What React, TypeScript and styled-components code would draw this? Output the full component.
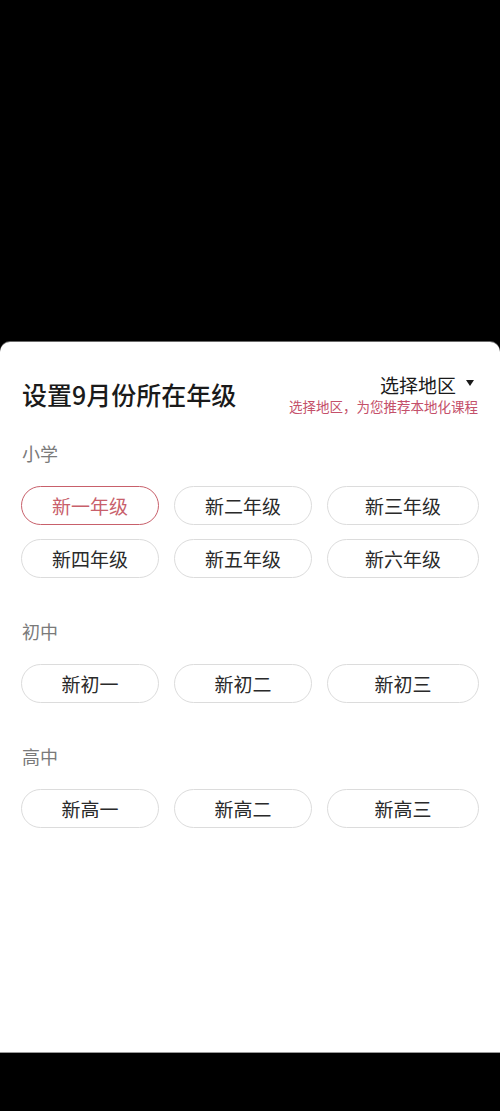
import React, { useState } from 'react';
import styled, { createGlobalStyle } from 'styled-components';

const GlobalStyle = createGlobalStyle`
  html, body {
    margin: 0;
    padding: 0;
    background: #000;
  }
  body {
    font-family: "Noto Sans CJK SC", "Noto Sans", sans-serif;
  }
`;

const sections = [
  { title: '小学', grades: ['新一年级', '新二年级', '新三年级', '新四年级', '新五年级', '新六年级'] },
  { title: '初中', grades: ['新初一', '新初二', '新初三'] },
  { title: '高中', grades: ['新高一', '新高二', '新高三'] },
];

// Whole screen: dimmed backdrop, bottom sheet, nav bar
const Screen = styled.div`
  width: 500px;
  height: 1111px;
  display: flex;
  flex-direction: column;
  background: #000;
`;

const Backdrop = styled.div`
  height: 342px;
  flex-shrink: 0;
  background: #000;
`;

const Sheet = styled.div`
  flex: 1;
  background: #fff;
  border-radius: 10px 10px 0 0;
  padding: 30px 21px 0 22px;
  box-shadow: 0 -1px 0 #6a6a6a;
`;

const NavBar = styled.div`
  height: 58px;
  flex-shrink: 0;
  background: #000;
  border-top: 1px solid #9a9a9a;
`;

// Header with title and region selector
const Header = styled.div`
  display: flex;
  align-items: center;
  justify-content: space-between;
`;

const Title = styled.h1`
  margin: 0;
  font-size: 25px;
  line-height: 32px;
  font-weight: 500;
  color: #1a1a1a;
`;

const Region = styled.div`
  display: flex;
  flex-direction: column;
  align-items: flex-end;
  margin-right: 1px;
`;

const RegionPicker = styled.button`
  display: flex;
  align-items: center;
  gap: 10px;
  border: none;
  background: none;
  padding: 0 4px 0 0;
  height: 25px;
  font-family: inherit;
  font-size: 19px;
  color: #1a1a1a;
  cursor: pointer;
`;

const Caret = styled.span`
  width: 0;
  height: 0;
  border-left: 4px solid transparent;
  border-right: 4px solid transparent;
  border-top: 6px solid #1a1a1a;
  margin-top: -3px;
`;

const RegionHint = styled.div`
  font-size: 13.5px;
  line-height: 18px;
  color: #c4506a;
`;

// Grade sections
const Section = styled.section<{ $first?: boolean }>`
  margin-top: ${({ $first }) => ($first ? '26px' : '41px')};
`;

const SectionTitle = styled.div`
  font-size: 18px;
  line-height: 24px;
  color: #7a7a7a;
`;

const GradeGrid = styled.div`
  display: grid;
  grid-template-columns: 138px 138px 1fr;
  column-gap: 15px;
  row-gap: 14px;
  margin-top: 21px;
  margin-left: -1px;
`;

const GradeButton = styled.button<{ $active?: boolean }>`
  height: 39px;
  border-radius: 20px;
  border: ${({ $active }) => ($active ? '1.5px solid #c8606b' : '1px solid #dcdcdc')};
  background: #fff;
  font-family: inherit;
  font-size: 19px;
  color: ${({ $active }) => ($active ? '#c8606b' : '#2a2a2a')};
  cursor: pointer;
  padding: 0;
`;

export default function App() {
  const [selected, setSelected] = useState('新一年级');

  return (
    <>
      <GlobalStyle />
      <Screen>
        <Backdrop />
        <Sheet>
          <Header>
            <Title>设置9月份所在年级</Title>
            <Region>
              <RegionPicker>
                选择地区
                <Caret />
              </RegionPicker>
              <RegionHint>选择地区，为您推荐本地化课程</RegionHint>
            </Region>
          </Header>

          {sections.map((section, i) => (
            <Section key={section.title} $first={i === 0}>
              <SectionTitle>{section.title}</SectionTitle>
              <GradeGrid>
                {section.grades.map((g) => (
                  <GradeButton key={g} $active={g === selected} onClick={() => setSelected(g)}>
                    {g}
                  </GradeButton>
                ))}
              </GradeGrid>
            </Section>
          ))}
        </Sheet>
        <NavBar />
      </Screen>
    </>
  );
}
